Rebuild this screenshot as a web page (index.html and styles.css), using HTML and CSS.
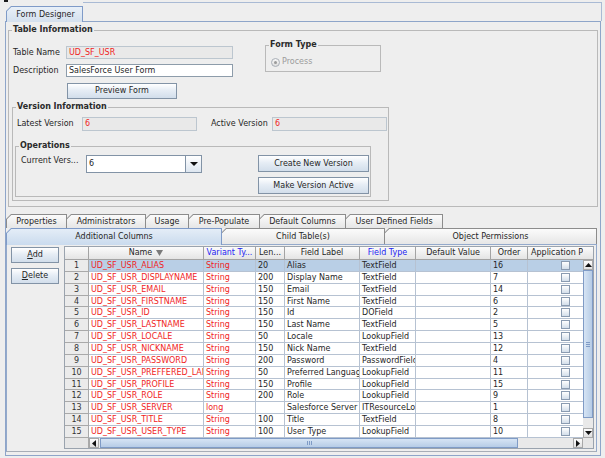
FILE: index.html
```html
<!DOCTYPE html>
<html lang="en">
<head>
<meta charset="utf-8">
<title>Form Designer</title>
<link rel="stylesheet" href="styles.css">
</head>
<body>
<div class="mark"></div>
<div class="strip">
  <div class="tab tab-sel main-tab"><span class="tab-in">Form Designer</span></div>
  <div class="strip-fill"></div>
</div>
<div class="panel">
  <fieldset class="group ti">
    <legend>Table Information</legend>
    <div class="ti-top">
      <div class="ti-left">
        <div class="frow"><span class="lbl lbl-tn">Table Name</span><span class="field field-dis red w167">UD_SF_USR</span></div>
        <div class="frow"><span class="lbl lbl-tn">Description</span><span class="field w167">SalesForce User Form</span></div>
        <div class="btn preview">Preview Form</div>
      </div>
      <fieldset class="group ftype">
        <legend>Form Type</legend>
        <div class="radio-row"><span class="radio"><span class="radio-dot"></span></span><span class="dis-text">Process</span></div>
      </fieldset>
    </div>
    <fieldset class="group vi">
      <legend>Version Information</legend>
      <div class="vrow">
        <span class="lbl lbl-lv">Latest Version</span><span class="field field-dis red w115">6</span>
        <span class="lbl lbl-av">Active Version</span><span class="field field-dis red w115">6</span>
      </div>
      <fieldset class="group ops">
        <legend>Operations</legend>
        <div class="orow">
          <span class="lbl lbl-cv">Current Vers...</span>
          <div class="combo"><span class="combo-val">6</span><span class="combo-btn"><svg width="8" height="4" viewBox="0 0 8 4"><polygon points="0,0 8,0 4,4" fill="#111"/></svg></span></div>
          <div class="obtns">
            <div class="btn obtn">Create New Version</div>
            <div class="btn obtn">Make Version Active</div>
          </div>
        </div>
      </fieldset>
    </fieldset>
  </fieldset>

  <div class="tp2">
    <div class="trow trow1">
      <div class="tab t-prop"><span class="tab-in">Properties</span></div>
      <div class="tab t-adm"><span class="tab-in">Administrators</span></div>
      <div class="tab t-use"><span class="tab-in">Usage</span></div>
      <div class="tab t-pre"><span class="tab-in">Pre-Populate</span></div>
      <div class="tab t-def"><span class="tab-in">Default Columns</span></div>
      <div class="tab t-udf"><span class="tab-in">User Defined Fields</span></div>
    </div>
    <div class="trow trow2">
      <div class="tab tab-sel t-add"><span class="tab-in">Additional Columns</span></div>
      <div class="tab t-child"><span class="tab-in">Child Table(s)</span></div>
      <div class="tab t-obj"><span class="tab-in">Object Permissions</span></div>
    </div>
    <div class="tp2-body">
      <div class="side">
        <div class="btn sbtn"><span class="u">A</span>dd</div>
        <div class="btn sbtn"><span class="u">D</span>elete</div>
      </div>
      <div class="scroll">
        <div class="viewport">
          <div class="tr thead">
            <div class="th"></div>
            <div class="th">Name <svg class="sort" width="7" height="6" viewBox="0 0 7 6"><polygon points="0,0 7,0 3.5,6" fill="#7a7a7a"/></svg></div>
            <div class="th blue">Variant Ty...</div>
            <div class="th">Len...</div>
            <div class="th">Field Label</div>
            <div class="th blue">Field Type</div>
            <div class="th">Default Value</div>
            <div class="th">Order</div>
            <div class="th th-app">Application Properties</div>
          </div>
          <div class="tr sel"><div class="td rn">1</div><div class="td red">UD_SF_USR_ALIAS</div><div class="td red">String</div><div class="td">20</div><div class="td">Alias</div><div class="td">TextField</div><div class="td"></div><div class="td">16</div><div class="td app"><span class="cb"></span></div></div>
          <div class="tr"><div class="td rn">2</div><div class="td red">UD_SF_USR_DISPLAYNAME</div><div class="td red">String</div><div class="td">200</div><div class="td">Display Name</div><div class="td">TextField</div><div class="td"></div><div class="td">7</div><div class="td app"><span class="cb"></span></div></div>
          <div class="tr"><div class="td rn">3</div><div class="td red">UD_SF_USR_EMAIL</div><div class="td red">String</div><div class="td">150</div><div class="td">Email</div><div class="td">TextField</div><div class="td"></div><div class="td">14</div><div class="td app"><span class="cb"></span></div></div>
          <div class="tr"><div class="td rn">4</div><div class="td red">UD_SF_USR_FIRSTNAME</div><div class="td red">String</div><div class="td">150</div><div class="td">First Name</div><div class="td">TextField</div><div class="td"></div><div class="td">6</div><div class="td app"><span class="cb"></span></div></div>
          <div class="tr"><div class="td rn">5</div><div class="td red">UD_SF_USR_ID</div><div class="td red">String</div><div class="td">150</div><div class="td">Id</div><div class="td">DOField</div><div class="td"></div><div class="td">2</div><div class="td app"><span class="cb"></span></div></div>
          <div class="tr"><div class="td rn">6</div><div class="td red">UD_SF_USR_LASTNAME</div><div class="td red">String</div><div class="td">150</div><div class="td">Last Name</div><div class="td">TextField</div><div class="td"></div><div class="td">5</div><div class="td app"><span class="cb"></span></div></div>
          <div class="tr"><div class="td rn">7</div><div class="td red">UD_SF_USR_LOCALE</div><div class="td red">String</div><div class="td">50</div><div class="td">Locale</div><div class="td">LookupField</div><div class="td"></div><div class="td">13</div><div class="td app"><span class="cb"></span></div></div>
          <div class="tr"><div class="td rn">8</div><div class="td red">UD_SF_USR_NICKNAME</div><div class="td red">String</div><div class="td">150</div><div class="td">Nick Name</div><div class="td">TextField</div><div class="td"></div><div class="td">12</div><div class="td app"><span class="cb"></span></div></div>
          <div class="tr"><div class="td rn">9</div><div class="td red">UD_SF_USR_PASSWORD</div><div class="td red">String</div><div class="td">200</div><div class="td">Password</div><div class="td">PasswordField</div><div class="td"></div><div class="td">4</div><div class="td app"><span class="cb"></span></div></div>
          <div class="tr"><div class="td rn">10</div><div class="td red">UD_SF_USR_PREFFERED_LANGUAGE</div><div class="td red">String</div><div class="td">50</div><div class="td">Preferred Language</div><div class="td">LookupField</div><div class="td"></div><div class="td">11</div><div class="td app"><span class="cb"></span></div></div>
          <div class="tr"><div class="td rn">11</div><div class="td red">UD_SF_USR_PROFILE</div><div class="td red">String</div><div class="td">150</div><div class="td">Profile</div><div class="td">LookupField</div><div class="td"></div><div class="td">15</div><div class="td app"><span class="cb"></span></div></div>
          <div class="tr"><div class="td rn">12</div><div class="td red">UD_SF_USR_ROLE</div><div class="td red">String</div><div class="td">200</div><div class="td">Role</div><div class="td">LookupField</div><div class="td"></div><div class="td">9</div><div class="td app"><span class="cb"></span></div></div>
          <div class="tr"><div class="td rn">13</div><div class="td red">UD_SF_USR_SERVER</div><div class="td red">long</div><div class="td"></div><div class="td">Salesforce Server</div><div class="td">ITResourceLookupField</div><div class="td"></div><div class="td">1</div><div class="td app"><span class="cb"></span></div></div>
          <div class="tr"><div class="td rn">14</div><div class="td red">UD_SF_USR_TITLE</div><div class="td red">String</div><div class="td">100</div><div class="td">Title</div><div class="td">TextField</div><div class="td"></div><div class="td">8</div><div class="td app"><span class="cb"></span></div></div>
          <div class="tr"><div class="td rn">15</div><div class="td red">UD_SF_USR_USER_TYPE</div><div class="td red">String</div><div class="td">100</div><div class="td">User Type</div><div class="td">LookupField</div><div class="td"></div><div class="td">10</div><div class="td app"><span class="cb"></span></div></div>
        </div>
        <div class="hdr-corner"></div>
        <div class="vscroll">
          <div class="arrow"><svg width="7" height="4" viewBox="0 0 7 4"><polygon points="0,4 3.5,0 7,4" fill="#111"/></svg></div>
          <div class="vthumb"><span class="grip"></span><span class="grip"></span><span class="grip"></span></div>
          <div class="vtrack"></div>
          <div class="arrow"><svg width="7" height="4" viewBox="0 0 7 4"><polygon points="0,0 7,0 3.5,4" fill="#111"/></svg></div>
        </div>
        <div class="hbar">
          <div class="rn-corner"></div>
          <div class="hscroll">
            <div class="arrow harrow"><svg width="4" height="7" viewBox="0 0 4 7"><polygon points="4,0 4,7 0,3.5" fill="#111"/></svg></div>
            <div class="hthumb"><span class="hgrip"></span><span class="hgrip"></span><span class="hgrip"></span></div>
            <div class="htrack"></div>
            <div class="arrow harrow"><svg width="4" height="7" viewBox="0 0 4 7"><polygon points="0,0 4,3.5 0,7" fill="#111"/></svg></div>
          </div>
        </div>
        <div class="corner"></div>
      </div>
    </div>
  </div>
</div>
</body>
</html>
```

FILE: styles.css
```css
* { box-sizing: border-box; }
html, body { margin: 0; padding: 0; }
body {
  width: 605px;
  height: 458px;
  overflow: hidden;
  background: #eeeeee;
  font-family: "DejaVu Sans", "Liberation Sans", sans-serif;
  font-size: 8px;
  line-height: 10px;
  color: #262626;
}

.mark { width: 4px; height: 2px; margin-left: 4px; background: #1c1c1c; }

/* top tab strip */
.strip { display: flex; align-items: flex-end; height: 19px; }
.strip-fill {
  flex: 1;
  align-self: stretch;
  margin-right: 3px;
  border-top: 1px solid #a9bad4;
  border-right: 1px solid #a9bad4;
}

/* Metal style tabs */
.tab {
  position: relative;
  flex: none;
  padding: 1px 1px 0 1px;
  background: #8c8c8c;
  clip-path: polygon(0 5px, 5px 0, 100% 0, 100% 100%, 0 100%);
}
.tab + .tab { margin-left: -1px; }
.tab-in {
  display: flex;
  align-items: center;
  justify-content: center;
  height: 100%;
  white-space: nowrap;
  background: linear-gradient(#fbfbfb, #e6e6e6);
  clip-path: polygon(0 4.3px, 4.3px 0, 100% 0, 100% 100%, 0 100%);
}
.tab-sel { background: #7f9bc8; z-index: 1; margin-bottom: -1px; }
.tab-sel .tab-in { background: linear-gradient(#e4edf7, #cadbee); }

.main-tab { width: 77px; height: 16px; margin-left: 6px; }
.main-tab .tab-in { background: linear-gradient(#e9f0f8, #d4e0ee); padding-left: 2px; }

/* main panel */
.panel {
  margin-left: 5px;
  width: 596px;
  height: 435px;
  border: 1px solid #8ea5c9;
  padding: 0 2px 3px 0;
}

/* titled groups */
.group {
  margin: 0;
  padding: 0;
  min-width: 0;
  border: 1px solid #b9b9b9;
}
.group legend {
  padding: 0 1px;
  margin-left: 3px;
  font-weight: bold;
  line-height: 10px;
  color: #2a2a2a;
}

.ti { margin: 3px 0 0 2px; width: 590px; padding-bottom: 5px; }
.ti-top { display: flex; align-items: flex-start; margin-top: 5px; padding-left: 4px; }
.ti-left { width: 220px; padding-top: 6px; }

.frow { display: flex; align-items: center; height: 13px; }
.frow + .frow { margin-top: 5px; }
.lbl { white-space: nowrap; color: #262626; }
.lbl-tn { width: 53px; }

.field {
  display: flex;
  align-items: center;
  height: 13px;
  padding-left: 2px;
  border: 1px solid #8d9caa;
  background: #ffffff;
  white-space: nowrap;
  overflow: hidden;
}
.field-dis { background: #e9e9e9; border-color: #bcc6cf; }
.w167 { width: 167px; }
.w115 { width: 115px; height: 14px; }
.red { color: #f01e1e; }
.blue { color: #2424f2; }

.btn {
  display: flex;
  align-items: center;
  justify-content: center;
  border: 1px solid #8293a6;
  background: linear-gradient(#ffffff, #e6edf5 45%, #d2deeb);
  white-space: nowrap;
  color: #262626;
}
.preview { width: 110px; height: 16px; margin: 6px 0 0 54px; }

.ftype { width: 116px; margin-left: 32px; padding-bottom: 4px; }
.radio-row { display: flex; align-items: center; height: 10px; margin: 7px 0 0 5px; }
.radio {
  display: flex;
  align-items: center;
  justify-content: center;
  width: 9px;
  height: 9px;
  margin-right: 2px;
  border-radius: 50%;
  border: 1px solid #a9afb7;
  background: linear-gradient(#f7f7f7, #dddddd);
}
.radio-dot { width: 3px; height: 3px; border-radius: 50%; background: #9a9a9a; }
.dis-text { color: #9c9c9c; }

.vi { width: 377px; margin: 3px 0 0 3px; padding-bottom: 3px; }
.vrow { display: flex; align-items: center; height: 14px; margin-top: 5px; padding-left: 4px; }
.lbl-lv { width: 65px; }
.lbl-av { width: 61px; margin-left: 14px; }

.ops { width: 356px; margin: 10px 0 0 2px; padding-bottom: 2px; }
.orow { display: flex; align-items: flex-start; margin-top: 4px; padding-left: 5px; }
.lbl-cv { width: 65px; margin-top: 1px; }
.combo {
  display: flex;
  width: 116px;
  height: 18px;
  border: 1px solid #8293a6;
  background: #ffffff;
}
.combo-val { flex: 1; display: flex; align-items: center; padding-left: 2px; }
.combo-btn {
  display: flex;
  align-items: center;
  justify-content: center;
  width: 16px;
  border-left: 1px solid #8293a6;
  background: linear-gradient(#ffffff, #dde6f0);
}
.obtns { display: flex; flex-direction: column; gap: 5px; margin-left: 56px; }
.obtn { width: 111px; height: 17px; }

/* lower tabbed pane */
.tp2 { width: 591px; margin-top: 7px; }
.trow { display: flex; }
.trow1 .tab { height: 14px; }
.trow2 .tab { height: 16px; }
.trow2 .tab-sel { height: 17px; }
.t-prop { width: 61px; }
.t-adm { width: 80px; }
.t-use { width: 44px; }
.t-pre { width: 72px; }
.t-def { width: 87px; }
.t-udf { width: 98px; }
.t-add { width: 216px; }
.t-child { width: 164px; }
.t-obj { flex: 1; }

.tp2-body {
  display: flex;
  height: 208px;
  padding: 1px 2px 0 4px;
  border: 1px solid #93a9cb;
  border-bottom-color: #a7adb6;
}
.side { display: flex; flex-direction: column; gap: 5px; width: 48px; margin-right: 5px; padding-top: 1px; }
.sbtn { height: 16px; }
.u { text-decoration: underline; }

/* table scroll pane */
.scroll {
  display: grid;
  grid-template-columns: 518px 10px;
  grid-template-rows: 13px 178px 10px;
  width: 530px;
  height: 203px;
  border: 1px solid #9aa3ae;
  background: #eeeeee;
}
.viewport { grid-row: 1 / 3; grid-column: 1; overflow: hidden; background: #ffffff; }
.tr {
  display: grid;
  grid-template-columns: 24px 115px 52px 29px 75px 56px 75px 37px 76px;
  width: 539px;
  height: 11.87px;
}
.thead { height: 13px; }
.th {
  display: flex;
  align-items: center;
  justify-content: center;
  gap: 4px;
  overflow: hidden;
  white-space: nowrap;
  border-right: 1px solid #a3a3a3;
  border-bottom: 1px solid #a3a3a3;
  background: linear-gradient(#fbfbfb, #e4e4e4);
}
.th-app { justify-content: flex-start; padding-left: 3px; }
.sort { flex: none; }
.td {
  overflow: hidden;
  white-space: nowrap;
  padding-left: 2px;
  line-height: 11px;
  border-right: 1px solid #b6c2d2;
  border-bottom: 1px solid #b6c2d2;
  background: #ffffff;
}
.td.rn {
  padding-left: 0;
  text-align: center;
  color: #333333;
  background: #ebebeb;
  border-color: #a9a9a9;
}
.sel .td { background: #b9cfe6; }
.sel .td.rn { background: #ebebeb; }
.app { display: flex; align-items: center; justify-content: center; padding-left: 0; }
.cb {
  width: 9px;
  height: 9px;
  border: 1px solid #8a9bb1;
  background: linear-gradient(#ffffff, #d3deea);
}

.hdr-corner {
  grid-row: 1;
  grid-column: 2;
  background: linear-gradient(#fbfbfb, #e4e4e4);
  border-bottom: 1px solid #a3a3a3;
}
.vscroll {
  grid-row: 2;
  grid-column: 2;
  display: flex;
  flex-direction: column;
  background: #e9e9e9;
}
.arrow {
  display: flex;
  align-items: center;
  justify-content: center;
  flex: none;
  width: 10px;
  height: 10px;
  border: 1px solid #a8a8a8;
  background: linear-gradient(#fdfdfd, #e0e0e0);
}
.vthumb {
  display: flex;
  flex-direction: column;
  align-items: center;
  justify-content: center;
  gap: 1px;
  height: 148px;
  border: 1px solid #7f9bc6;
  background: linear-gradient(90deg, #d6e4f4, #b6cce6);
}
.grip { width: 4px; height: 1px; background: #7f9bc6; }
.vtrack { flex: 1; }

.hbar { grid-row: 3; grid-column: 1; display: flex; }
.rn-corner { width: 24px; background: #e6e6e6; border-right: 1px solid #a9a9a9; }
.hscroll { flex: 1; display: flex; background: #e9e9e9; }
.harrow { width: 10px; height: 10px; }
.hthumb {
  display: flex;
  align-items: center;
  justify-content: center;
  gap: 1px;
  width: 418px;
  margin-left: 1px;
  border: 1px solid #7f9bc6;
  background: linear-gradient(#d6e4f4, #b6cce6);
}
.hgrip { width: 1px; height: 4px; background: #7f9bc6; }
.htrack { flex: 1; }
.corner { grid-row: 3; grid-column: 2; background: #e6e6e6; }
```
